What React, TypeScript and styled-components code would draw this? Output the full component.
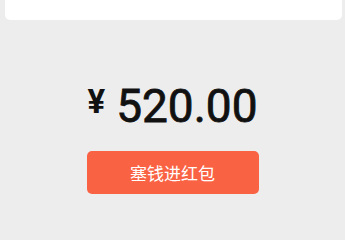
import React from "react";
import styled, { createGlobalStyle } from "styled-components";

const GlobalStyle = createGlobalStyle`
  html, body {
    margin: 0;
    padding: 0;
    background: #ededed;
    overflow: hidden;
  }
  body {
    font-family: "Noto Sans CJK SC", "Noto Sans", sans-serif;
  }
`;

const Page = styled.div`
  width: 345px;
  height: 222px;
  display: flex;
  flex-direction: column;
  align-items: center;
  background: #ededed;
  overflow: hidden;
`;

const Card = styled.div`
  align-self: stretch;
  margin: -38px 3px 0 5px;
  height: 58px;
  background: #ffffff;
  border-radius: 5px;
  display: flex;
  align-items: center;
  justify-content: space-between;
  padding: 0 14px 0 17px;
`;

const CardLabel = styled.span`
  font-family: "Noto Sans CJK SC", sans-serif;
  font-size: 15px;
  color: #1a1a1a;
`;

const Chevron = styled.svg`
  width: 8px;
  height: 14px;
`;

const Amount = styled.div`
  margin-top: 63px;
  display: flex;
  align-items: flex-start;
  gap: 11px;
  color: #111111;
  font-family: Roboto, "Liberation Sans", sans-serif;
  line-height: 1;
`;

const Currency = styled.span`
  font-size: 33px;
  font-weight: 700;
  margin-top: 2px;
`;

const Value = styled.span`
  font-size: 46px;
  font-weight: 400;
  -webkit-text-stroke: 0.8px #111111;
`;

const Button = styled.button`
  margin-top: 22px;
  width: 172px;
  height: 43px;
  border: none;
  border-radius: 5px;
  background: #fa6244;
  color: #ffffff;
  font-family: "Noto Sans CJK SC", sans-serif;
  font-size: 17px;
  display: flex;
  align-items: center;
  justify-content: center;
  padding: 0;
`;

export default function App() {
  return (
    <>
      <GlobalStyle />
      <Page>
        <Card>
          <CardLabel>红包封面</CardLabel>
          <Chevron viewBox="0 0 8 14">
            <path d="M1.5 1 L6.5 7 L1.5 13" stroke="#b2b2b2" strokeWidth="1.4" fill="none" />
          </Chevron>
        </Card>
        <Amount>
          <Currency>¥</Currency>
          <Value>520.00</Value>
        </Amount>
        <Button>塞钱进红包</Button>
      </Page>
    </>
  );
}
